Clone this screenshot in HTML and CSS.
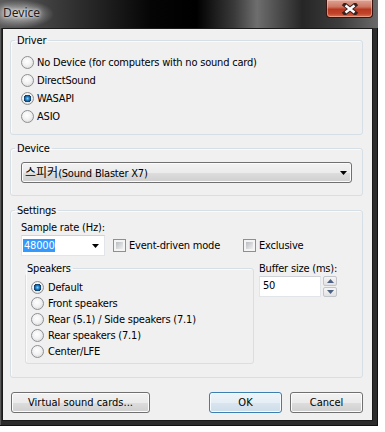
FILE: index.html
```html
<!DOCTYPE html>
<html lang="en">
<head>
    <meta charset="UTF-8">
    <title>Device</title>
    <link rel="stylesheet" href="styles.css">
</head>
<body>
    <div class="window">
        <div class="titlebar">
            <span class="title">Device</span>
            <div class="close">
                <svg width="18" height="12" viewBox="0 0 18 12">
                    <path d="M4 2 L14 10 M14 2 L4 10" stroke="#3a2220" stroke-width="4.5" stroke-linecap="square"/>
                    <path d="M4.5 2.5 L13.5 9.5 M13.5 2.5 L4.5 9.5" stroke="#ffffff" stroke-width="2.4"/>
                </svg>
            </div>
        </div>

        <div class="client">
            <fieldset class="group driver">
                <legend>Driver</legend>
                <div class="option"><span class="radio"></span>No Device (for computers with no sound card)</div>
                <div class="option"><span class="radio"></span>DirectSound</div>
                <div class="option"><span class="radio checked"></span>WASAPI</div>
                <div class="option"><span class="radio"></span>ASIO</div>
            </fieldset>

            <fieldset class="group device">
                <legend>Device</legend>
                <div class="dropdown">
                    <span><span class="ko">스피커</span>(Sound Blaster X7)</span>
                    <svg class="arrow" width="7" height="4" viewBox="0 0 7 4"><path d="M0 0 H7 L3.5 4 Z" fill="#000"/></svg>
                </div>
            </fieldset>

            <fieldset class="group settings">
                <legend>Settings</legend>
                <div class="label">Sample rate (Hz):</div>
                <div class="rate-row">
                    <div class="combo">
                        <span class="selected">48000</span>
                        <svg class="arrow" width="7" height="4" viewBox="0 0 7 4"><path d="M0 0 H7 L3.5 4 Z" fill="#000"/></svg>
                    </div>
                    <div class="checkitem event"><span class="check"></span>Event-driven mode</div>
                    <div class="checkitem"><span class="check"></span>Exclusive</div>
                </div>
                <div class="lower-row">
                    <fieldset class="group speakers">
                        <legend>Speakers</legend>
                        <div class="option small"><span class="radio checked"></span>Default</div>
                        <div class="option small"><span class="radio"></span>Front speakers</div>
                        <div class="option small"><span class="radio"></span>Rear (5.1) / Side speakers (7.1)</div>
                        <div class="option small"><span class="radio"></span>Rear speakers (7.1)</div>
                        <div class="option small"><span class="radio"></span>Center/LFE</div>
                    </fieldset>
                    <div class="buffer">
                        <div class="label">Buffer size (ms):</div>
                        <div class="spin-row">
                            <div class="edit">50</div>
                            <div class="spin">
                                <div class="spin-btn"><svg width="7" height="4" viewBox="0 0 7 4"><path d="M0 4 H7 L3.5 0 Z" fill="#4d6185"/></svg></div>
                                <div class="spin-btn"><svg width="7" height="4" viewBox="0 0 7 4"><path d="M0 0 H7 L3.5 4 Z" fill="#4d6185"/></svg></div>
                            </div>
                        </div>
                    </div>
                </div>
            </fieldset>

            <div class="buttons">
                <button class="btn virtual">Virtual sound cards...</button>
                <button class="btn default ok">OK</button>
                <button class="btn cancel">Cancel</button>
            </div>
        </div>
    </div>
</body>
</html>
```

FILE: styles.css
```css
body {
    margin: 0;
    background-color: #ffffff;
    font-family: "DejaVu Sans Condensed", "DejaVu Sans", "Noto Sans CJK KR", sans-serif;
    font-stretch: condensed;
    font-size: 11px;
    letter-spacing: -0.2px;
    line-height: 13px;
    color: #000000;
}
.window {
    width: 378px;
    height: 426px;
    display: flex;
    flex-direction: column;
    background-color: #2c2c2c;
    box-shadow: inset -1px -1px 0 #111111, inset 1px 0 0 #5a5a5a;
}
.titlebar {
    height: 28px;
    flex: none;
    display: flex;
    justify-content: space-between;
    align-items: flex-start;
    background:
        radial-gradient(ellipse 34px 14px at 20px 14px, rgba(200, 200, 200, 0.9), rgba(200, 200, 200, 0) 100%),
        linear-gradient(90deg, #5c5c5c 0, #2b2b2b 22%, #050505 40%, #000000 52%, #3a3a3a 62%, #6e6e6e 68%, #262626 80%, #3d3d3d 90%, #6a6a6a 100%);
}
.title {
    font-family: "Noto Sans", sans-serif;
    font-stretch: normal;
    letter-spacing: 0;
    font-size: 12px;
    line-height: 14px;
    margin: 6px 0 0 3px;
    color: #1c1c1c;
    text-shadow: 0 0 6px rgba(255, 255, 255, 0.9), 0 0 3px rgba(255, 255, 255, 0.9);
}
.close {
    width: 47px;
    height: 18px;
    margin-right: 5px;
    box-sizing: border-box;
    display: flex;
    justify-content: center;
    align-items: center;
    border: 1px solid #3a1410;
    border-top: none;
    border-radius: 0 0 4px 4px;
    background: linear-gradient(#dea393 0, #cd7662 40%, #b8381f 55%, #c0442a 80%, #e07150 100%);
    box-shadow: inset 0 0 0 1px rgba(255, 220, 210, 0.45);
}
.client {
    flex: 1;
    margin: 0 5px 5px 2px;
    padding: 5px 9px 0 7px;
    border: 1px solid #1a1a1a;
    background-color: #f0f0f0;
}
.group {
    margin: 0;
    border: 1px solid #d5dfe5;
    border-radius: 3px;
    box-shadow: inset 1px 1px 0 #fbfbfb;
    min-width: 0;
}
.group legend {
    margin-left: -6px;
    padding: 0 2px;
    line-height: 13px;
}
.driver {
    padding: 6px 10px 9px 10px;
}
.option {
    display: flex;
    align-items: center;
    gap: 3px;
    height: 18px;
}
.option.small {
    height: 16px;
    gap: 4px;
}
.radio {
    flex: none;
    width: 13px;
    height: 13px;
    box-sizing: border-box;
    border-radius: 50%;
    border: 1px solid #8d9093;
    background: radial-gradient(circle at 45% 40%, #ffffff 0, #f2f2f2 45%, #cfd0d2 100%);
}
.radio.checked {
    background:
        radial-gradient(circle at 50% 50%, #7fd3fb 0, #2b8cd0 1.6px, #0f4c84 3px, #1d3a55 3.6px, rgba(0, 0, 0, 0) 4px),
        radial-gradient(circle at 45% 40%, #ffffff 0, #f2f2f2 45%, #cfd0d2 100%);
}
.device {
    margin-top: 7px;
    padding: 7px 10px 12px 10px;
}
.dropdown {
    height: 21px;
    box-sizing: border-box;
    display: flex;
    align-items: center;
    justify-content: space-between;
    padding: 0 4px 0 3px;
    border: 1px solid #707070;
    border-radius: 3px;
    background: linear-gradient(#f2f2f2 0, #ebebeb 50%, #dddddd 51%, #cfcfcf 100%);
    box-shadow: inset 0 0 0 1px #fbfbfb;
}
.ko {
    font-family: "Noto Sans CJK KR", sans-serif;
    font-size: 12px;
    letter-spacing: 0;
}
.settings {
    margin-top: 8px;
    padding: 4px 10px 13px 10px;
}
.label {
    height: 13px;
    margin-bottom: 1px;
}
.rate-row {
    display: flex;
    align-items: center;
}
.combo {
    width: 84px;
    height: 21px;
    box-sizing: border-box;
    display: flex;
    align-items: center;
    justify-content: space-between;
    padding: 0 5px 0 1px;
    background-color: #ffffff;
    border: 1px solid #e1e4e8;
    border-top-color: #cfd3d8;
}
.selected {
    background-color: #3399ff;
    color: #ffffff;
    padding: 0 1px;
}
.checkitem {
    display: flex;
    align-items: center;
    gap: 3px;
}
.checkitem.event {
    width: 130px;
    margin-left: 8px;
}
.check {
    flex: none;
    width: 13px;
    height: 13px;
    box-sizing: border-box;
    padding: 2px;
    border: 1px solid #8e8f8f;
    background: linear-gradient(135deg, #b9bdc2, #efefef) content-box, #f4f4f4;
}
.lower-row {
    display: flex;
    align-items: flex-start;
    gap: 5px;
    margin-top: 6px;
}
.speakers {
    margin-left: 4px;
    width: 229px;
    box-sizing: border-box;
    padding: 4px 5px 4px 5px;
}
.buffer {
    display: flex;
    flex-direction: column;
}
.spin-row {
    display: flex;
    gap: 2px;
}
.edit {
    width: 62px;
    height: 21px;
    box-sizing: border-box;
    padding: 2px 3px;
    background-color: #ffffff;
    border: 1px solid #e1e4e8;
    border-top-color: #cfd3d8;
}
.spin {
    display: flex;
    flex-direction: column;
    gap: 1px;
}
.spin-btn {
    width: 14px;
    height: 10px;
    box-sizing: border-box;
    display: flex;
    justify-content: center;
    align-items: center;
    border: 1px solid #c2c5c9;
    border-radius: 2px;
    background: linear-gradient(#f5f5f5, #e2e2e2);
}
.buttons {
    display: flex;
    margin-top: 14px;
    margin-left: 1px;
}
.btn {
    height: 21px;
    padding: 0;
    font: inherit;
    font-stretch: condensed;
    color: #000000;
    border: 1px solid #707070;
    border-radius: 3px;
    background: linear-gradient(#f2f2f2 0, #ebebeb 50%, #dddddd 51%, #cfcfcf 100%);
    box-shadow: inset 0 0 0 1px #fcfcfc;
}
.virtual {
    width: 139px;
}
.ok {
    width: 73px;
    margin-left: auto;
}
.cancel {
    width: 73px;
    margin-left: 8px;
}
.btn.default {
    border-color: #3c7fb1;
    background: linear-gradient(#eef4f9 0, #e6eef5 50%, #d9e5ef 51%, #cfdde9 100%);
    box-shadow: inset 0 0 0 1px #f5fbff;
}
```
